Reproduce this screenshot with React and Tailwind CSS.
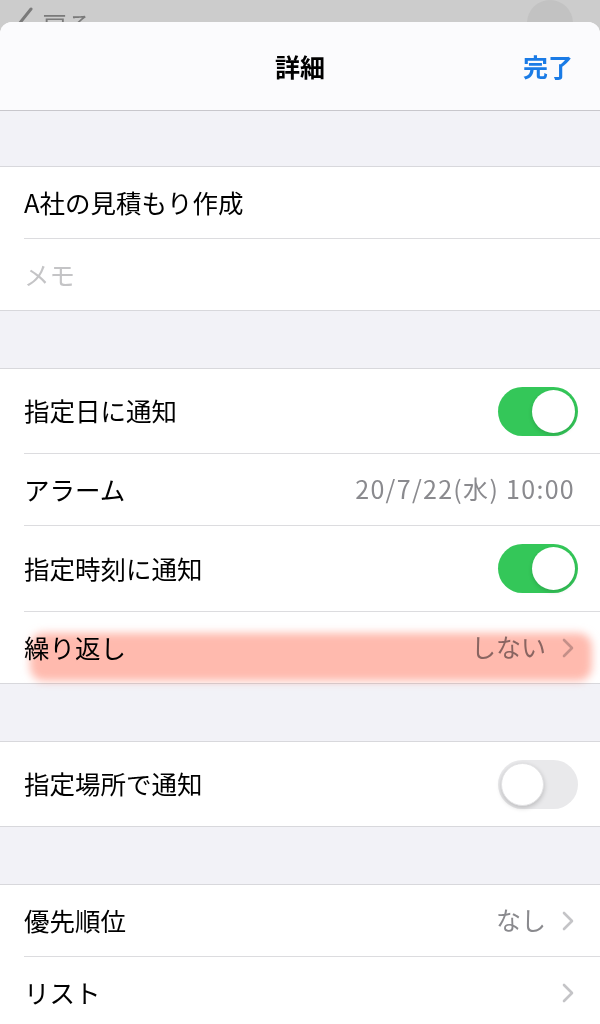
import React from "react";

const font = { fontFamily: '"Noto Sans CJK JP", "Noto Sans", sans-serif' };

function Toggle({ on }) {
  if (on) {
    return (
      <div className="w-[80px] h-[49px] rounded-full bg-[#34c759] p-[3px] flex justify-end shrink-0">
        <div className="w-[43px] h-[43px] rounded-full bg-white shadow-[0_2px_4px_rgba(0,0,0,0.15)]" />
      </div>
    );
  }
  return (
    <div className="w-[80px] h-[49px] rounded-full bg-[#e9e9eb] p-[3px] flex justify-start shrink-0">
      <div className="w-[43px] h-[43px] rounded-full bg-white shadow-[0_2px_5px_rgba(0,0,0,0.2)] border border-[#e2e2e4]" />
    </div>
  );
}

function Chevron() {
  return (
    <svg width="14" height="22" viewBox="0 0 14 22" className="shrink-0 mr-[3px]">
      <path d="M3 3 L11 11 L3 19" fill="none" stroke="#c4c4c7" strokeWidth="2.6" strokeLinecap="round" strokeLinejoin="round" />
    </svg>
  );
}

function Row({ h, label, labelClass = "text-black", right, sep = true }) {
  return (
    <div className={`pl-[24px] ${h}`}>
      <div className={`h-full flex items-center justify-between pr-[22px] ${sep ? "border-b border-[#dcdcdf]" : ""}`}>
        <span className={`text-[25.5px] leading-none -mt-[2px] ${labelClass}`}>{label}</span>
        {right}
      </div>
    </div>
  );
}

function Gap() {
  return <div className="h-[58px] bg-[#f2f2f7] border-b border-[#d8d8dc]" />;
}

export default function App() {
  return (
    <div className="w-[600px] h-[1024px] bg-[#cccccc] overflow-hidden" style={font}>
      <div className="h-[22px] relative overflow-hidden">
        <div className="absolute left-[16px] top-[7px] flex items-start gap-[8px]">
          <svg width="18" height="18" viewBox="0 0 18 18">
            <path d="M3 17 L15 2" stroke="#7a7a7a" strokeWidth="3" strokeLinecap="round" fill="none" />
          </svg>
          <span className="text-[25px] leading-none text-[#7a7a7a] mt-[5px]">戻る</span>
        </div>
        <div className="absolute left-[527px] top-0 w-[46px] h-[46px] rounded-full bg-[#c2c2c2]" />
      </div>
      <div className="bg-white rounded-t-[12px] overflow-hidden relative">
        <div className="h-[89px] bg-[#fbfbfd] border-b border-[#c8c7cc] flex items-center justify-center relative">
          <span className="text-[25px] font-bold text-black leading-none mt-[1px]">詳細</span>
          <span className="absolute right-[27px] text-[25px] font-bold text-[#1a7be6] leading-none mt-[1px]">完了</span>
        </div>
        <div className="h-[56px] bg-[#f2f2f7] border-b border-[#d8d8dc]" />
        <Row h="h-[72px]" label="A社の見積もり作成" />
        <Row h="h-[71px]" label="メモ" labelClass="text-[#c4c4c6]" sep={false} />
        <div className="border-t border-[#d8d8dc]" />
        <Gap />
        <Row h="h-[85px]" label="指定日に通知" right={<Toggle on />} />
        <Row
          h="h-[72px]"
          label="アラーム"
          right={<span className="text-[25px] leading-none text-[#8a8a8e] tracking-[1.3px] mr-[3px] -mt-[2px]">20/7/22(水) 10:00</span>}
        />
        <Row h="h-[86px]" label="指定時刻に通知" right={<Toggle on />} />
        <Row
          h="h-[71px]"
          label="繰り返し"
          sep={false}
          right={
            <div className="flex items-center gap-[15px]">
              <span className="text-[25px] leading-none text-[#8a8a8e] -mt-[2px]">しない</span>
              <Chevron />
            </div>
          }
        />
        <div className="border-t border-[#d8d8dc]" />
        <Gap />
        <Row h="h-[84px]" label="指定場所で通知" sep={false} right={<Toggle on={false} />} />
        <div className="border-t border-[#d8d8dc]" />
        <Gap />
        <Row
          h="h-[72px]"
          label="優先順位"
          right={
            <div className="flex items-center gap-[15px]">
              <span className="text-[25px] leading-none text-[#8a8a8e] -mt-[2px]">なし</span>
              <Chevron />
            </div>
          }
        />
        <Row h="h-[72px]" label="リスト" right={<Chevron />} />
        <div className="pointer-events-none absolute left-[30px] top-[611px] w-[562px] h-[48px] rounded-[14px] bg-[#ff8c78] opacity-60 blur-[4px] mix-blend-multiply" />
      </div>
    </div>
  );
}
